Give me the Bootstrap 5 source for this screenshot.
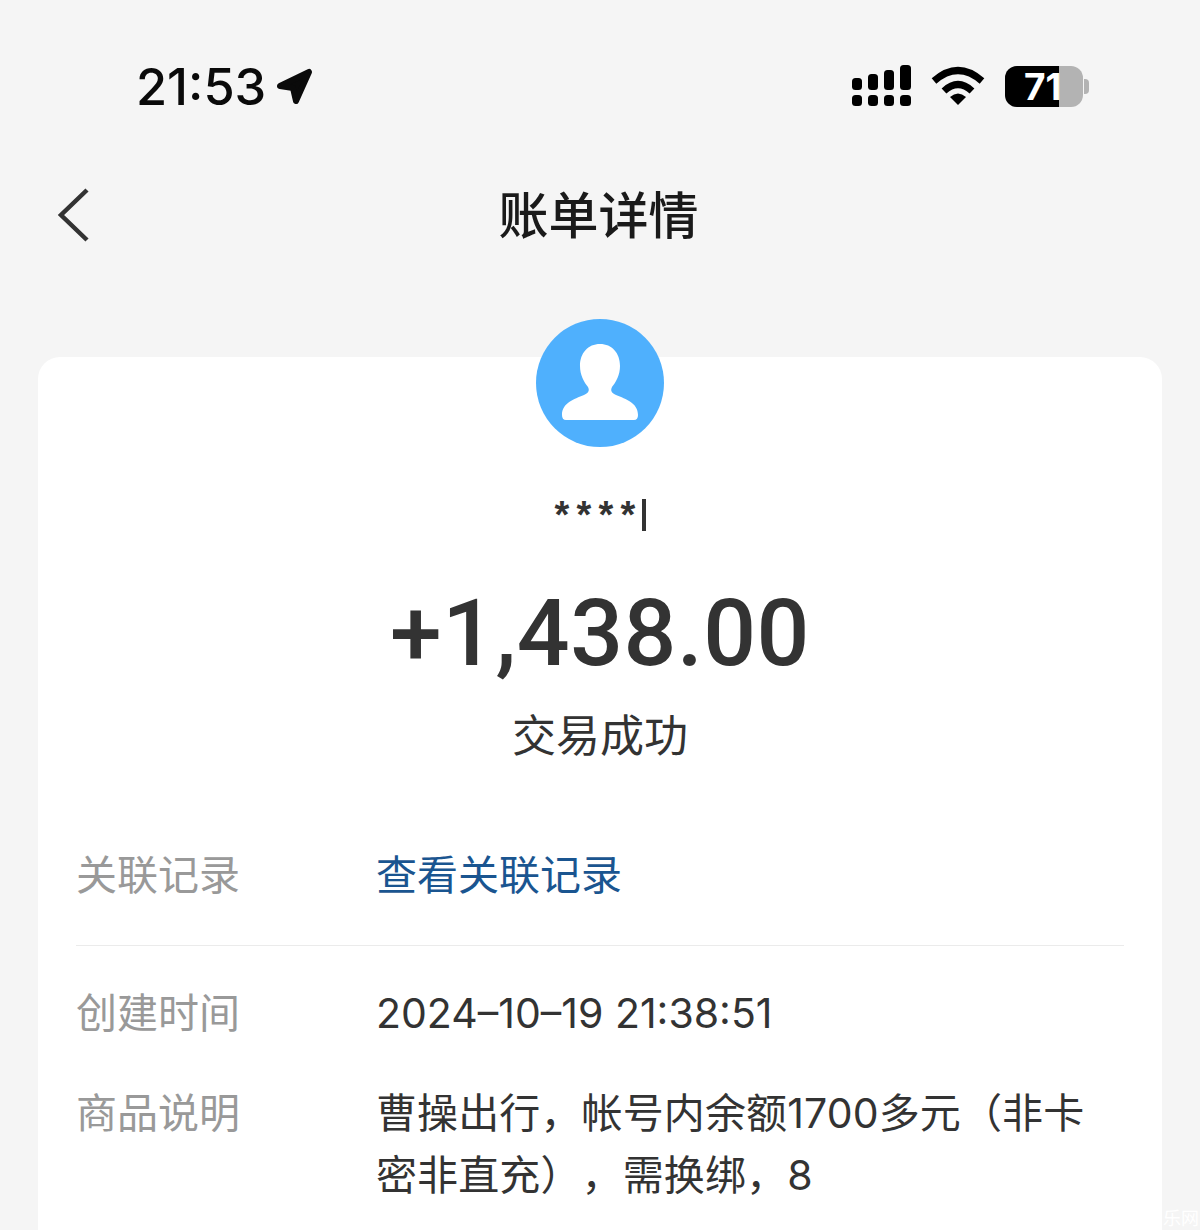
<!DOCTYPE html>
<html lang="zh">
<head>
<meta charset="utf-8">
<title>账单详情</title>
<link href="https://cdn.jsdelivr.net/npm/bootstrap@5.3.0/dist/css/bootstrap.min.css" rel="stylesheet">
<style>
html,body{height:1230px;overflow:hidden}
body{background:#f5f5f5;font-family:"Noto Sans CJK SC","Liberation Sans",sans-serif;color:#333;position:relative;text-spacing-trim:space-all}
.phone-status{height:130px;padding:55px 111px 0 136px}
.clock{font-family:Inter,"Liberation Sans",sans-serif;font-weight:500;font-size:50.5px;line-height:64px;color:#0a0a0a}
.arrow-ic{margin-left:10px}
.status-right{gap:20px;padding-top:10px}
.signal-ic{margin-right:-2px}
.batt{position:relative;width:78px;height:41px;border-radius:12px;background:#b3b3b3}
.batt-fill{position:absolute;left:0;top:0;bottom:0;width:54px;background:#000;border-radius:12px 0 0 12px}
.batt-num{position:absolute;left:19px;top:0;font:700 37px/42px Inter,"Liberation Sans",sans-serif;color:#fff;white-space:nowrap}
.batt-nub{width:5px;height:15px;background:#b3b3b3;border-radius:0 4px 4px 0;margin-left:1px}
.title-bar{height:169px;position:relative;padding:48px 3px 0 0}
.back-ic{position:absolute;left:57px;top:57px}
.page-title{font-size:50px;line-height:68px;font-weight:500;color:#1a1a1a;margin:0;text-align:center}
.bill-panel{margin:58px 38px 0;background:#fff;border-radius:22px 22px 0 0;height:873px;position:relative;padding:0 38px}
.avatar-wrap{position:absolute;left:498px;top:-38px;width:128px;height:128px}
.payer{padding-top:132px;height:180px;display:flex;justify-content:center;align-items:flex-start;font-family:"Liberation Sans",sans-serif;font-size:38px;line-height:52px;color:#333;font-weight:700}
.payer-txt{letter-spacing:7.2px;margin-left:1px}
.caret-bar{width:4px;height:32px;background:#333;margin:10px 0 0 0}
.amount{font-family:Roboto,"Liberation Sans",sans-serif;font-weight:500;font-size:93px;line-height:110px;text-align:center;color:#333;letter-spacing:.5px;margin-top:42px}
.state{font-size:44px;line-height:64px;text-align:center;color:#333;margin-top:12px}
.bill-row{display:flex;align-items:baseline;font-size:41px;line-height:62px}
.bill-label{width:300px;flex:none;color:#999}
.bill-val{color:#333;flex:1;white-space:nowrap;font-family:Inter,"Noto Sans CJK SC",sans-serif}
.bill-val.numeric{font-weight:400;font-size:41px}
.related{margin-top:76px;padding-bottom:39px;border-bottom:1.5px solid #ebebeb}
.related .bill-val{color:#1a5590}
.created{margin-top:33px}
.goods{margin-top:35px}
.goods .bill-val{white-space:normal;padding-right:30px;letter-spacing:.12px}
.wm{position:absolute;right:1px;bottom:0;font-size:18px;line-height:26px;color:#fff;white-space:nowrap}
</style>
</head>
<body>
<div class="phone-status d-flex justify-content-between align-items-start">
  <div class="d-flex align-items-center">
    <span class="clock">21:53</span>
    <svg class="arrow-ic" width="38" height="40" viewBox="0 0 38 40"><path d="M4 19 L33 5 L20 34 L17 21Z" fill="#0a0a0a" stroke="#0a0a0a" stroke-width="6" stroke-linejoin="round"/></svg>
  </div>
  <div class="status-right d-flex align-items-center">
    <svg class="signal-ic" width="62" height="42" viewBox="0 0 62 42" fill="#000">
      <rect x="1" y="13" width="10" height="12" rx="3.5"/><rect x="17" y="9" width="10" height="16" rx="3.5"/><rect x="33" y="5" width="10" height="20" rx="3.5"/><rect x="49" y="0" width="11" height="25" rx="3.5"/>
      <rect x="1" y="30" width="10" height="11" rx="3.5"/><rect x="17" y="30" width="10" height="11" rx="3.5"/><rect x="33" y="30" width="10" height="11" rx="3.5"/><rect x="49" y="30" width="11" height="11" rx="3.5"/>
    </svg>
    <svg width="54" height="40" viewBox="0 0 54 40" fill="none" stroke="#000" stroke-width="7">
      <path d="M3 15 Q27 -6 51 15"/><path d="M13 25 Q27 12 41 25"/><path d="M19 31 L27 39 L35 31 Q27 24 19 31Z" fill="#000" stroke="none"/>
    </svg>
    <div class="d-flex align-items-center">
      <div class="batt"><div class="batt-fill"></div><div class="batt-num">71</div></div>
      <div class="batt-nub"></div>
    </div>
  </div>
</div>
<div class="title-bar">
  <svg class="back-ic" width="34" height="56" viewBox="0 0 34 56" fill="none" stroke="#333" stroke-width="4.5"><path d="M30 3 L4 28 L30 53"/></svg>
  <h1 class="page-title">账单详情</h1>
</div>
<div class="bill-panel">
  <div class="avatar-wrap">
    <svg width="128" height="128" viewBox="0 0 128 128">
      <circle cx="64" cy="64" r="64" fill="#4fb0fd"/>
      <path d="M64 25 C76 25 84 34 84 47 C84 56 80 63 76 68 C74 72 76 74 80 76 C90 80 102 84 102 96 Q102 101 98 101 L30 101 Q26 101 26 96 C26 84 38 80 48 76 C52 74 54 72 52 68 C48 63 44 56 44 47 C44 34 52 25 64 25Z" fill="#fff"/>
    </svg>
  </div>
  <div class="payer"><span class="payer-txt">****</span><span class="caret-bar"></span></div>
  <div class="amount">+1,438.00</div>
  <div class="state">交易成功</div>
  <div class="bill-row related"><div class="bill-label">关联记录</div><div class="bill-val">查看关联记录</div></div>
  <div class="bill-row created"><div class="bill-label">创建时间</div><div class="bill-val numeric">2024–10–19 21:38:51</div></div>
  <div class="bill-row goods"><div class="bill-label">商品说明</div><div class="bill-val">曹操出行，帐号内余额1700多元（非卡密非直充），需换绑，8</div></div>
</div>
<div class="wm">乐网</div>
</body>
</html>
